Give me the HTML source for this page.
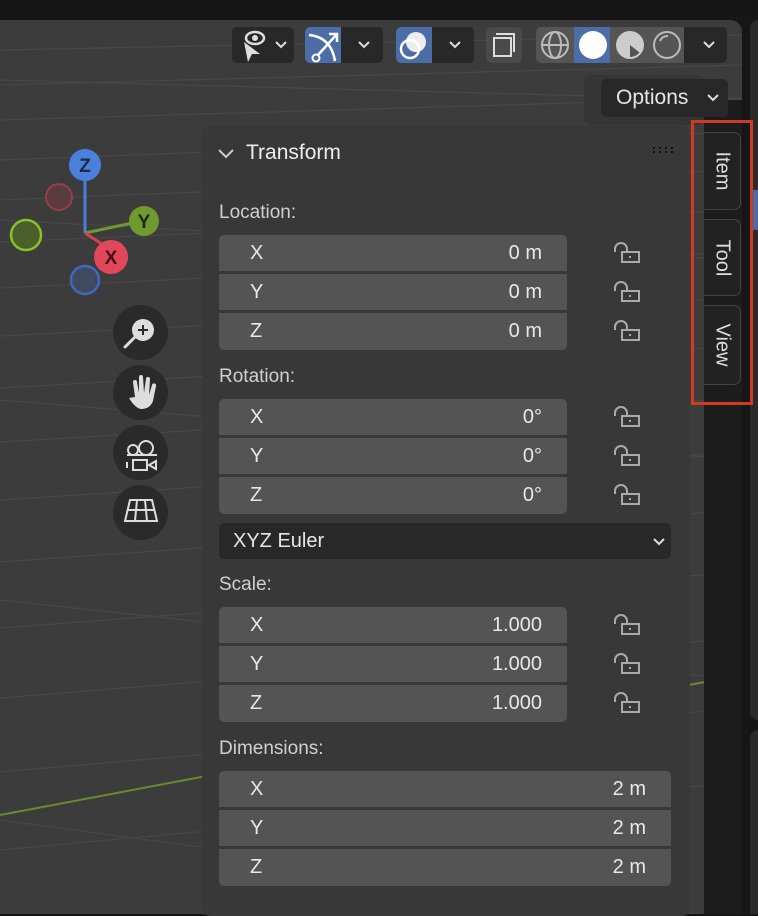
<!DOCTYPE html>
<html><head><style>
*{margin:0;padding:0;box-sizing:border-box}
body{width:758px;height:914px;overflow:hidden;background:#161616;font-family:"Liberation Sans",sans-serif;position:relative}
.abs{position:absolute}
.vp{left:0;top:20px;width:742px;height:894px;background:#3c3c3c;border-top-right-radius:12px;overflow:hidden}
.btn{background:#282828;border-radius:5px}
.panel{left:202px;top:126px;width:488px;height:790px;background:#383838;border-radius:8px}
.f{position:absolute;left:219px;width:348px;height:36px;background:#545454;color:#e8e8e8;font-size:20px;line-height:36px}
.f .l{position:absolute;left:31px}
.f .v{position:absolute;right:25px}
.lab{position:absolute;left:219px;color:#d0d0d0;font-size:19px}
.tab{position:absolute;left:704px;width:37px;background:#222;border:1px solid #444;border-left:none;border-radius:0 7px 7px 0;color:#ddd;font-size:20px}
.tab span{position:absolute;left:50%;top:50%;transform:translate(-50%,-50%) rotate(90deg);white-space:nowrap}
.nav{position:absolute;left:113px;width:55px;height:55px;border-radius:50%;background:#2a2a2a}
</style></head><body>
<div class="abs vp">
<svg class="abs" style="left:0;top:0" width="742" height="894">
<g stroke="#474747" stroke-width="1.3" fill="none">
<path d="M0 30 L742 15 M0 65 L742 45 M0 100 L742 78 M0 140 L742 112 M0 180 L742 150 M0 222 L742 190 M0 268 L742 232 M0 316 L742 278 M0 368 L742 326 M0 422 L742 378 M0 480 L742 432 M0 542 L742 490 M0 608 L742 552 M0 678 L742 618 M0 752 L742 688 M0 830 L742 762"/>
<path d="M0 60 L742 80 M0 200 L742 240 M0 380 L742 440 M0 580 L742 660 M0 800 L742 900"/>
</g>
<path d="M0 795 L742 655" stroke="#6b8a2e" stroke-width="2"/>
</svg>
</div>
<div class="abs" style="left:750px;top:20px;width:8px;height:700px;background:#2b2b2b;border-radius:8px 0 0 8px"></div>
<div class="abs" style="left:752px;top:190px;width:6px;height:40px;background:#4a6aa8"></div>
<div class="abs" style="left:750px;top:730px;width:8px;height:184px;background:#2b2b2b;border-radius:8px 0 0 0"></div>
<div class="abs" style="left:704px;top:100px;width:38px;height:814px;background:#1d1d1d"></div>

<div class="abs btn" style="left:232px;top:27px;width:62px;height:36px"></div>
<svg class="abs" style="left:236px;top:28px" width="56" height="34"><path d="M8 14 L12 34 L16 26 L24 26 Z" fill="#ddd"/><ellipse cx="19" cy="10" rx="9" ry="6" fill="none" stroke="#ddd" stroke-width="2.5"/><circle cx="19" cy="10" r="3" fill="#ddd"/><path d="M40 14 l5 5 5-5" stroke="#ddd" stroke-width="2" fill="none"/></svg>
<div class="abs btn" style="left:305px;top:27px;width:78px;height:36px"></div>
<div class="abs" style="left:305px;top:27px;width:36px;height:36px;background:#4c6ea8;border-radius:5px 0 0 5px"></div>
<svg class="abs" style="left:305px;top:27px" width="78" height="36"><path d="M4 8 Q26 10 30 34" stroke="#fff" stroke-width="2.5" fill="none"/><circle cx="11" cy="31" r="3.5" stroke="#fff" stroke-width="2" fill="none"/><path d="M13 28 L32 7 M24 7 h8 v8" stroke="#fff" stroke-width="2.5" fill="none"/><path d="M54 15 l5 5 5-5" stroke="#ddd" stroke-width="2" fill="none"/></svg>
<div class="abs btn" style="left:396px;top:27px;width:78px;height:36px"></div>
<div class="abs" style="left:396px;top:27px;width:36px;height:36px;background:#4c6ea8;border-radius:5px 0 0 5px"></div>
<svg class="abs" style="left:396px;top:27px" width="78" height="36"><circle cx="20" cy="15" r="10" fill="#eee"/><circle cx="14" cy="22" r="9" stroke="#fff" stroke-width="2.5" fill="none"/><path d="M54 15 l5 5 5-5" stroke="#ddd" stroke-width="2" fill="none"/></svg>
<div class="abs" style="left:486px;top:27px;width:36px;height:36px;background:#4a4a4a;border-radius:5px"></div>
<svg class="abs" style="left:486px;top:27px" width="36" height="36"><path d="M10 7 h18 v18 M8 11 h17 v18 h-17 z" stroke="#ddd" stroke-width="2" fill="none"/></svg>
<div class="abs btn" style="left:536px;top:27px;width:191px;height:36px"></div>
<div class="abs" style="left:536px;top:27px;width:148px;height:36px;background:#555;border-radius:5px 0 0 5px"></div>
<div class="abs" style="left:574px;top:27px;width:36px;height:36px;background:#4c6ea8"></div>
<svg class="abs" style="left:536px;top:27px" width="191" height="36"><g stroke="#bbb" stroke-width="2" fill="none"><circle cx="19" cy="18" r="13"/><ellipse cx="19" cy="18" rx="6" ry="13"/><path d="M6 18 h26"/></g><circle cx="57" cy="18" r="14" fill="#fff"/><circle cx="94" cy="18" r="13" stroke="#ccc" stroke-width="2" fill="#555"/><path d="M94 5 A13 13 0 0 0 94 31 L94 18 L104 26 A13 13 0 0 0 94 5" fill="#ccc"/><circle cx="131" cy="18" r="13" stroke="#bbb" stroke-width="2" fill="none"/><path d="M124 14 A8 8 0 0 1 132 9" stroke="#bbb" stroke-width="2" fill="none"/><path d="M168 15 l5 5 5-5" stroke="#ddd" stroke-width="2" fill="none"/></svg>

<div class="abs" style="left:584px;top:75px;width:120px;height:50px;background:#353535;border-radius:8px"></div>
<div class="abs btn" style="left:601px;top:79px;width:127px;height:38px;color:#e6e6e6;font-size:21px;line-height:38px;padding-left:15px">Options</div>
<svg class="abs" style="left:705px;top:90px" width="16" height="16"><path d="M3 5 l5 5 5-5" stroke="#ddd" stroke-width="2" fill="none"/></svg>

<svg class="abs" style="left:0;top:140px" width="200" height="170">
<circle cx="59" cy="57" r="13" fill="#5a3a3e" stroke="#94404a" stroke-width="2"/>
<circle cx="26" cy="95" r="15" fill="#4c5e2a" stroke="#8ac02c" stroke-width="2.5"/>
<circle cx="85" cy="140" r="14" fill="#3e4a5e" stroke="#3d6ac0" stroke-width="2.5"/>
<path d="M85 36 V93" stroke="#4a7fd8" stroke-width="3"/>
<path d="M85 93 L142 81" stroke="#6e9a30" stroke-width="3"/>
<path d="M85 93 L108 108" stroke="#d84050" stroke-width="3"/>
<circle cx="85" cy="25" r="16" fill="#4a80dc"/>
<circle cx="144" cy="81" r="15" fill="#6e9a30"/>
<circle cx="111" cy="117" r="17" fill="#e0475a"/>
<text x="85" y="32" font-size="19" font-weight="bold" fill="#1a2a48" text-anchor="middle" font-family="Liberation Sans">Z</text>
<text x="144" y="88" font-size="19" font-weight="bold" fill="#1e2a0a" text-anchor="middle" font-family="Liberation Sans">Y</text>
<text x="111" y="124" font-size="19" font-weight="bold" fill="#4a0c14" text-anchor="middle" font-family="Liberation Sans">X</text>
</svg>
<div class="nav" style="top:305px"></div>
<div class="nav" style="top:365px"></div>
<div class="nav" style="top:425px"></div>
<div class="nav" style="top:485px"></div>
<svg class="abs" style="left:113px;top:305px" width="55" height="240">
<circle cx="30" cy="25" r="11" fill="#ddd"/><path d="M25 25 h10 M30 20 v10" stroke="#2a2a2a" stroke-width="2"/><path d="M21 33 L12 42" stroke="#ddd" stroke-width="3" stroke-linecap="round"/>
<path d="M16 93 L22 92 L20 77 a2 2 0 0 1 4 0 L26 88 L26 72 a2 2 0 0 1 4 0 L31 88 L33 74 a2 2 0 0 1 4 0 L36 90 L39 80 a2 2 0 0 1 4 1 L40 96 Q37 104 28 104 Q22 103 16 93Z" fill="#ddd"/>
<g stroke="#ddd" stroke-width="2" fill="none"><circle cx="20" cy="145" r="5"/><circle cx="33" cy="143" r="7"/><path d="M14 150 h30 M20 155 h14 v10 h-14z M14 157 v6 M36 160 l7 -4 v8z"/></g>
<g stroke="#ddd" stroke-width="2" fill="none"><path d="M17 195 h22 l5 21 h-32z M15 205 h26 M24 195 l-2 21 M32 195 l2 21"/></g>
</svg>

<div class="abs panel"></div>
<svg class="abs" style="left:216px;top:146px" width="20" height="16"><path d="M3 4 l7 7 7-7" stroke="#ccc" stroke-width="2" fill="none"/></svg>
<div class="abs" style="left:246px;top:141px;color:#eee;font-size:21px">Transform</div>
<svg class="abs" style="left:653px;top:147px" width="24" height="10"><g fill="#111"><rect x="0" y="0" width="2" height="2"/><rect x="6" y="0" width="2" height="2"/><rect x="12" y="0" width="2" height="2"/><rect x="18" y="0" width="2" height="2"/><rect x="0" y="4" width="2" height="2"/><rect x="6" y="4" width="2" height="2"/><rect x="12" y="4" width="2" height="2"/><rect x="18" y="4" width="2" height="2"/></g></svg>

<div class="lab" style="top:202px">Location:</div>
<div class="f" style="top:235px;border-radius:5px 5px 0 0"><span class="l">X</span><span class="v">0 m</span></div>
<div class="f" style="top:274px"><span class="l">Y</span><span class="v">0 m</span></div>
<div class="f" style="top:313px;height:37px;border-radius:0 0 5px 5px"><span class="l">Z</span><span class="v">0 m</span></div>
<div class="lab" style="top:366px">Rotation:</div>
<div class="f" style="top:399px;border-radius:5px 5px 0 0"><span class="l">X</span><span class="v">0°</span></div>
<div class="f" style="top:438px"><span class="l">Y</span><span class="v">0°</span></div>
<div class="f" style="top:477px;height:37px;border-radius:0 0 5px 5px"><span class="l">Z</span><span class="v">0°</span></div>
<div class="abs" style="left:219px;top:523px;width:452px;height:36px;background:#282828;border-radius:5px;color:#e6e6e6;font-size:20px;line-height:36px;padding-left:14px">XYZ Euler</div>
<svg class="abs" style="left:651px;top:534px" width="16" height="16"><path d="M3 5 l5 5 5-5" stroke="#ddd" stroke-width="2" fill="none"/></svg>
<div class="lab" style="top:574px">Scale:</div>
<div class="f" style="top:607px;border-radius:5px 5px 0 0"><span class="l">X</span><span class="v">1.000</span></div>
<div class="f" style="top:646px"><span class="l">Y</span><span class="v">1.000</span></div>
<div class="f" style="top:685px;height:37px;border-radius:0 0 5px 5px"><span class="l">Z</span><span class="v">1.000</span></div>
<div class="lab" style="top:738px">Dimensions:</div>
<div class="f" style="top:771px;width:452px;border-radius:5px 5px 0 0"><span class="l">X</span><span class="v">2 m</span></div>
<div class="f" style="top:810px;width:452px"><span class="l">Y</span><span class="v">2 m</span></div>
<div class="f" style="top:849px;width:452px;height:37px;border-radius:0 0 5px 5px"><span class="l">Z</span><span class="v">2 m</span></div>

<svg class="abs" style="left:612px;top:240px" width="32" height="480"><defs><g id="lk" stroke="#aaa" stroke-width="2" fill="none"><path d="M3 12 v-3 a6 6 0 0 1 12 0 v3"/><rect x="10" y="12" width="17" height="10"/><path d="M18 16 v2"/></g></defs>
<use href="#lk" y="0"/><use href="#lk" y="39"/><use href="#lk" y="78"/><use href="#lk" y="164"/><use href="#lk" y="203"/><use href="#lk" y="242"/><use href="#lk" y="372"/><use href="#lk" y="411"/><use href="#lk" y="450"/></svg>

<div class="tab" style="top:132px;height:78px"><span>Item</span></div>
<div class="tab" style="top:219px;height:77px"><span>Tool</span></div>
<div class="tab" style="top:305px;height:80px"><span>View</span></div>
<div class="abs" style="left:691px;top:120px;width:62px;height:285px;border:3px solid #d13a22"></div>
</body></html>
